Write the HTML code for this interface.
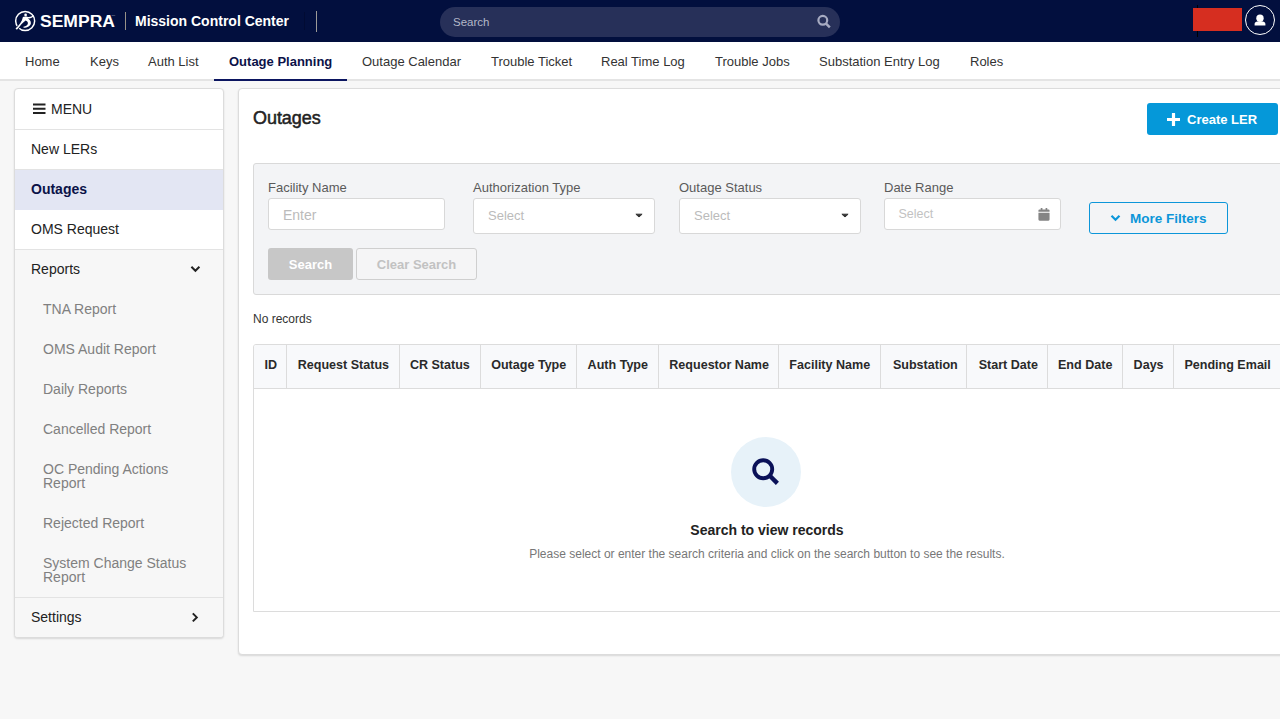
<!DOCTYPE html>
<html lang="en">
<head>
<meta charset="utf-8">
<title>Mission Control Center - Outages</title>
<style>
*{box-sizing:border-box;margin:0;padding:0}
html,body{width:1280px;height:719px;overflow:hidden}
body{background:#f7f7f7;font-family:"Liberation Sans",Arial,sans-serif;font-size:14px;color:#333;position:relative}
.abs{position:absolute}
/* header */
#hdr{position:absolute;left:0;top:0;width:1280px;height:42px;background:#020f3e}
#brand{position:absolute;left:40px;top:12px;font-size:16px;line-height:20px;color:#fff;font-weight:700;letter-spacing:0;transform:scaleX(1.095);transform-origin:0 0;white-space:nowrap}
#tm{position:absolute;left:111.500px;top:15px;font-size:2.500px;line-height:2.500px;color:#aeb2c4}
.vline{position:absolute;width:1px;background:#8a8578}
#app{position:absolute;left:135px;top:12px;font-size:14px;line-height:18px;font-weight:700;color:#fff;white-space:nowrap}
#srch{position:absolute;left:440px;top:7px;width:400px;height:30px;border-radius:15px;background:#273059}
#srch span{position:absolute;left:13px;top:8px;font-size:11.5px;line-height:15px;color:#b4b8c8}
/* nav */
#nav{position:absolute;left:0;top:42px;width:1280px;height:39px;background:#fff;border-bottom:2px solid #e4e4e4}
#nav a{position:absolute;top:1px;height:39px;line-height:38px;font-size:13px;color:#333;white-space:nowrap;text-decoration:none}
#nav a.on{font-weight:700;color:#0b1248}
#nav .bar{position:absolute;left:214px;top:37px;width:133px;height:2px;background:#0b1560}
/* sidebar */
#side{position:absolute;left:14px;top:88px;width:210px;height:550px;background:#fff;border:1px solid #dcdcdc;border-radius:4px;box-shadow:0 1px 2px rgba(0,0,0,.13);overflow:hidden}
#side .it{position:relative;height:40px;line-height:39px;padding-left:16px;font-size:14px;color:#222;border-bottom:1px solid #e3e3e3;white-space:nowrap}
#side .it.on{background:#e3e6f3;font-weight:700;color:#0b1248;border-bottom-color:#e3e6f3}
#side .grp{background:#f7f7f7;border-bottom:1px solid #e3e3e3}
#side .grp .it{border-bottom:0}
#side .sub{padding:12px 20px 14px 28px;font-size:14px;line-height:14px;color:#808080}
/* main */
#main{position:absolute;left:238px;top:88px;width:1060px;height:567px;background:#fff;border:1px solid #dcdcdc;border-radius:4px;box-shadow:0 1px 2px rgba(0,0,0,.13)}
#ttl{position:absolute;left:253px;top:107px;font-size:18px;line-height:22px;font-weight:400;color:#222;-webkit-text-stroke:.5px #222;letter-spacing:-.05px}
#create{position:absolute;left:1147px;top:103px;width:131px;height:32px;border-radius:3px;background:#0598d9;color:#fff;font-weight:700;font-size:13px;line-height:33px}
#filt{position:absolute;left:253px;top:163px;width:1040px;height:132px;background:#f3f4f6;border:1px solid #d9d9d9;border-radius:3px}
.lbl{position:absolute;top:180px;font-size:13px;line-height:15px;color:#5a5a5a;white-space:nowrap}
.inp{position:absolute;background:#fff;border:1px solid #d8d8d8;border-radius:3px;color:#bbb;font-size:14px}
.inp span{position:absolute;left:14px}
.caret{position:absolute;width:0;height:0;border-left:3.500px solid transparent;border-right:3.500px solid transparent;border-top:4px solid #333;border-radius:2px}
.btn{position:absolute;height:32px;border-radius:3px;font-weight:700;font-size:13px;line-height:32px;text-align:center;white-space:nowrap}
/* table */
#norec{position:absolute;left:253px;top:312px;font-size:12px;line-height:14px;color:#333}
#tbl{position:absolute;left:253px;top:344px;width:1040px;height:268px;border:1px solid #dcdcdc;background:#fff;border-radius:3px 3px 0 0;overflow:hidden}
#thead{position:absolute;left:0;top:0;width:1038px;height:44px;background:#f8f9fb;border-bottom:1px solid #dcdcdc}
#thead div{position:absolute;top:0;height:43px;line-height:40.500px;font-size:12.550px;font-weight:700;color:#2a2a2a;border-right:1px solid #dcdcdc;padding-left:11px;white-space:nowrap}
#circ{position:absolute;left:731px;top:437px;width:70px;height:70px;border-radius:35px;background:#e7f2f9}
#e1{position:absolute;left:253px;width:1028px;top:522px;text-align:center;font-size:14px;line-height:16px;font-weight:700;color:#222}
#e2{position:absolute;left:253px;width:1028px;top:547px;text-align:center;font-size:12px;line-height:14px;color:#777}
</style>
</head>
<body>
<div id="hdr">
  <svg class="abs" style="left:10px;top:6px" width="32" height="30" viewBox="0 0 32 30">
    <circle cx="15.15" cy="15" r="9.5" fill="none" stroke="#fff" stroke-width="1.5"/>
    <circle cx="15.6" cy="8.9" r="1.35" fill="#fff"/>
    <path d="M9.800 19.300L5.400 24.300" stroke="#020f3e" stroke-width="3.200" fill="none"/><path d="M12.900 11.100C14.200 10.300 16.200 10.500 18 10.900C20 11.200 21.800 10.500 23.300 9.100L23.900 9.900C22.200 11.700 20.100 12.500 17.700 12.600C19.700 13.600 21.100 15.200 20.900 17.300C20.700 19.800 17.600 21.800 13.600 21.800L13.400 20.700C16 20.400 17.900 19.100 17.900 17.300C17.900 15.800 16.900 14.800 15.600 14.400C12.800 16.400 10.200 19.600 6.900 23.700L5.500 22.600C9 19.200 12.200 15.600 12.900 11.100Z" fill="#fff"/>
  </svg>
  <div id="brand">SEMPRA</div>
  <div id="tm">TM</div>
  <div class="vline" style="left:125px;top:12px;height:18px;background:#989288"></div>
  <div id="app">Mission Control Center</div>
  <div class="vline" style="left:316px;top:11px;height:21px;background:#9c9a98"></div>
  <div class="vline" style="left:304px;top:12px;height:18px;background:#010b33"></div>
  <div id="srch"><span>Search</span>
    <svg class="abs" style="left:377px;top:7px" width="15" height="15" viewBox="0 0 15 15"><circle cx="5.800" cy="6.300" r="4.400" fill="none" stroke="#a7abc2" stroke-width="2.200"/><path d="M8.800 9.300l4 4" stroke="#a7abc2" stroke-width="2.500"/></svg>
  </div>
  <div class="abs" style="left:1197px;top:5px;width:1px;height:32px;background:#000"></div>
  <div class="abs" style="left:1193px;top:8px;width:49px;height:23px;background:#d62e20"></div>
  <div class="abs" style="left:1245px;top:5px;width:30px;height:30px;border:1px solid #fff;border-radius:15px"></div>
  <svg class="abs" style="left:1254px;top:14px" width="12" height="12" viewBox="0 0 12 12"><circle cx="6" cy="4.300" r="3.700" fill="#fff"/><path d="M.600 11.400v-1.300c0-1.500 1.300-2.500 2.800-2.500h5.200c1.500 0 2.800 1 2.800 2.500v1.300z" fill="#fff"/></svg>
</div>

<div id="nav">
  <a style="left:25px">Home</a>
  <a style="left:90px">Keys</a>
  <a style="left:148px">Auth List</a>
  <a class="on" style="left:229px">Outage Planning</a>
  <a style="left:362px">Outage Calendar</a>
  <a style="left:491px">Trouble Ticket</a>
  <a style="left:601px">Real Time Log</a>
  <a style="left:715px">Trouble Jobs</a>
  <a style="left:819px">Substation Entry Log</a>
  <a style="left:970px">Roles</a>
  <div class="bar"></div>
</div>

<div id="side">
  <div class="it" style="padding-left:36px;height:41px;line-height:40px">MENU
    <svg class="abs" style="left:18px;top:14px" width="13" height="12" viewBox="0 0 13 12"><path d="M0 1.500h12.500M0 5.750h12.500M0 10h12.500" stroke="#222" stroke-width="2.100"/></svg>
  </div>
  <div class="it">New LERs</div>
  <div class="it on">Outages</div>
  <div class="it">OMS Request</div>
  <div class="grp">
    <div class="it">Reports
      <svg class="abs" style="left:175px;top:15px" width="11" height="9" viewBox="0 0 11 9"><path d="M1.400 1.800l4 4 4-4" fill="none" stroke="#222" stroke-width="2"/></svg>
    </div>
    <div class="sub">TNA Report</div>
    <div class="sub">OMS Audit Report</div>
    <div class="sub">Daily Reports</div>
    <div class="sub">Cancelled Report</div>
    <div class="sub">OC Pending Actions Report</div>
    <div class="sub">Rejected Report</div>
    <div class="sub" style="padding-bottom:13px">System Change Status Report</div>
  </div>
  <div class="it" style="border-bottom:0;background:#f7f7f7;height:39px;line-height:38px">Settings
    <svg class="abs" style="left:176px;top:14px" width="9" height="11" viewBox="0 0 9 11"><path d="M1.800 1.400l4 4-4 4" fill="none" stroke="#222" stroke-width="2"/></svg>
  </div>
</div>

<div id="main"></div>
<div id="ttl">Outages</div>
<div id="create">
  <svg class="abs" style="left:19.500px;top:9.500px" width="13" height="13" viewBox="0 0 13 13"><path d="M6.500 .800v11.400M.800 6.500h11.400" stroke="#fff" stroke-width="3.200" stroke-linecap="round"/></svg>
  <span class="abs" style="left:40px;top:0">Create LER</span>
</div>

<div id="filt"></div>
<div class="lbl" style="left:268px">Facility Name</div>
<div class="lbl" style="left:473px">Authorization Type</div>
<div class="lbl" style="left:679px">Outage Status</div>
<div class="lbl" style="left:884px">Date Range</div>

<div class="inp" style="left:268px;top:198px;width:177px;height:32px"><span style="top:8px;line-height:16px">Enter</span></div>
<div class="inp" style="left:473px;top:198px;width:182px;height:36px"><span style="top:8.500px;line-height:16px;font-size:13px">Select</span><svg class="abs" style="left:161px;top:13.500px" width="8" height="6" viewBox="0 0 8 6"><path d="M.900 1.200h6.200l-3.100 2.800z" fill="#333" stroke="#333" stroke-width="1" stroke-linejoin="round"/></svg></div>
<div class="inp" style="left:679px;top:198px;width:182px;height:36px"><span style="top:8.500px;line-height:16px;font-size:13px">Select</span><svg class="abs" style="left:161px;top:13.500px" width="8" height="6" viewBox="0 0 8 6"><path d="M.900 1.200h6.200l-3.100 2.800z" fill="#333" stroke="#333" stroke-width="1" stroke-linejoin="round"/></svg></div>
<div class="inp" style="left:884px;top:198px;width:177px;height:32px"><span style="left:13.500px;top:7.500px;line-height:15px;font-size:12.500px;color:#c2c2c2">Select</span>
  <svg class="abs" style="left:153px;top:9px" width="12" height="13" viewBox="0 0 12 14"><path d="M0 5h12v7.500a1.200 1.200 0 0 1-1.200 1.200h-9.600a1.200 1.200 0 0 1-1.200-1.200z" fill="#848484"/><path d="M0 4v-1.300a1.200 1.200 0 0 1 1.200-1.200h9.600a1.200 1.200 0 0 1 1.200 1.200v1.300z" fill="#848484"/><rect x="2.500" y="0" width="1.800" height="3" rx=".5" fill="#848484"/><rect x="7.700" y="0" width="1.800" height="3" rx=".5" fill="#848484"/></svg>
</div>
<div class="btn" style="left:1089px;top:202px;width:139px;border:1px solid #0c96d9;color:#0c96d9;line-height:31px;background:transparent">
  <svg class="abs" style="left:20px;top:10.500px" width="11" height="9" viewBox="0 0 11 9"><path d="M1.500 1.800l4 4 4-4" fill="none" stroke="#0c96d9" stroke-width="2.200"/></svg>
  <span class="abs" style="left:40px;top:0;font-size:13.500px">More Filters</span>
</div>
<div class="btn" style="left:268px;top:248px;width:85px;background:#c7c7c7;color:#fff;line-height:33px">Search</div>
<div class="btn" style="left:356px;top:248px;width:121px;border:1px solid #cfcfcf;color:#c2c2c2;line-height:31px;background:#f5f5f6">Clear Search</div>

<div id="norec">No records</div>
<div id="tbl">
  <div id="thead">
    <div style="left:0px;width:33px;padding-left:10.4px">ID</div>
    <div style="left:33px;width:113px;padding-left:10.7px">Request Status</div>
    <div style="left:146px;width:81px;padding-left:9.9px">CR Status</div>
    <div style="left:227px;width:96px;padding-left:10.2px">Outage Type</div>
    <div style="left:323px;width:82px;padding-left:10.6px">Auth Type</div>
    <div style="left:405px;width:120px;padding-left:10.3px">Requestor Name</div>
    <div style="left:525px;width:102px;padding-left:10.3px">Facility Name</div>
    <div style="left:627px;width:86px;padding-left:11.9px">Substation</div>
    <div style="left:713px;width:81px;padding-left:11.7px">Start Date</div>
    <div style="left:794px;width:75px;padding-left:10.0px">End Date</div>
    <div style="left:869px;width:51px;padding-left:10.6px">Days</div>
    <div style="left:920px;width:108px;padding-left:10.4px">Pending Email</div>
  </div>
</div>
<div id="circ">
  <svg class="abs" style="left:20px;top:20px" width="30" height="30" viewBox="0 0 30 30"><circle cx="12.200" cy="12.200" r="9" fill="none" stroke="#0a1158" stroke-width="3.900"/><path d="M18.800 18.800l7.600 7.600" stroke="#0a1158" stroke-width="4.400" stroke-linecap="butt"/></svg>
</div>
<div id="e1">Search to view records</div>
<div id="e2">Please select or enter the search criteria and click on the search button to see the results.</div>
</body>
</html>
